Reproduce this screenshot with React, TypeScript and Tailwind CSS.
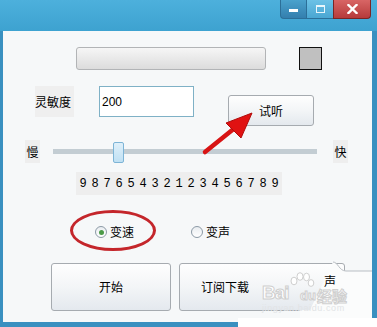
import React from "react";

const cjk = "font-['Noto_Sans_CJK_SC','Noto_Sans',sans-serif]";

function Radio({ checked, label }: { checked?: boolean; label: string }) {
  return (
    <div className="flex items-center">
      <div className="w-[12px] h-[12px] rounded-full border border-[#8c9aa6] bg-gradient-to-b from-[#e9edf0] to-[#ffffff] flex items-center justify-center">
        {checked && <div className="w-[5px] h-[5px] rounded-full bg-[#4b9a47]" />}
      </div>
      <span className="ml-[3px] leading-[16px]">{label}</span>
    </div>
  );
}

export default function App() {
  const digits = ["9", "8", "7", "6", "5", "4", "3", "2", "1", "2", "3", "4", "5", "6", "7", "8", "9"];
  return (
    <div className={`relative w-[377px] h-[327px] overflow-hidden bg-[#3990c0] text-[12px] text-black ${cjk}`}>
      {/* title bar */}
      <div className="h-[31px] bg-gradient-to-b from-[#4db0dc] to-[#3da2d0] flex justify-end pr-[6px]">
        <div className="flex h-[19px]">
          <div className="w-[26px] rounded-bl-[4px] border border-t-0 border-r-0 border-[#2c6f98] bg-gradient-to-b from-[#4aa2cd] to-[#347fae] flex items-center justify-center">
            <div className="w-[9px] h-[3px] bg-white mt-[2px]" />
          </div>
          <div className="w-[27px] border-b border-l border-[#2c6f98] bg-gradient-to-b from-[#6cc1e6] to-[#4aa6d2] flex items-center justify-center">
            <div className="w-[9px] h-[8px] border border-[#e9f6fb] border-t-2" />
          </div>
          <div className="w-[38px] rounded-br-[4px] border border-t-0 border-[#7a2525] bg-gradient-to-b from-[#d86565] to-[#b63a3b] flex items-center justify-center">
            <svg width="11" height="10" viewBox="0 0 11 10">
              <path d="M1.5 1 L9.5 9 M9.5 1 L1.5 9" stroke="#ffffff" strokeWidth="2.4" strokeLinecap="square" />
            </svg>
          </div>
        </div>
      </div>

      {/* client area */}
      <div className="relative ml-[3px] mr-[5px] h-[291px] bg-[#f6f8f9] flex flex-col">
        {/* row 1 */}
        <div className="mt-[16px] flex pl-[73px]">
          <div className="w-[190px] h-[23px] rounded-[3px] border border-[#b2b4b6] bg-gradient-to-b from-[#f6f6f6] to-[#dcdcdc]" />
          <div className="ml-[33px] w-[23px] h-[23px] border border-[#111] bg-[#c0c0c0]" />
        </div>

        {/* row 2 */}
        <div className="mt-[16px] flex items-start pl-[32px]">
          <div className="w-[39px] h-[31px] bg-[#efefef] flex items-center">灵敏度</div>
          <div className="ml-[25px] w-[95px] h-[31px] border border-[#7fb1c6] bg-white pl-[2px] flex items-center font-['Liberation_Sans',sans-serif] text-[12px]">
            200
          </div>
          <div className="ml-[34px] mt-[9px] w-[86px] h-[31px] rounded-[3px] border border-[#a6abb0] bg-gradient-to-b from-[#fefefe] via-[#f3f5f7] to-[#e4e9ee] flex items-center justify-center">
            试听
          </div>
        </div>

        {/* row 3 slider */}
        <div className="mt-[14px] flex items-center pl-[22px] h-[23px]">
          <div className="w-[15px] h-[23px] bg-[#eeeeee] flex items-center justify-center">慢</div>
          <div className="ml-[13px] w-[264px] h-[5px] bg-[#c3cdd3] relative">
            <div className="absolute left-[60px] top-[-7px] w-[11px] h-[21px] rounded-[2px] border border-[#7db4d6] bg-gradient-to-b from-[#dff0fa] to-[#bfe0f3]" />
          </div>
          <div className="ml-[16px] w-[15px] h-[23px] bg-[#eeeeee] flex items-center justify-center">快</div>
        </div>

        {/* row 4 digits */}
        <div className="mt-[9px] pl-[73px] flex">
          <div className="w-[206px] h-[23px] bg-[#eeeeee] flex items-center pl-[1px] font-['Liberation_Mono',monospace] text-[12px]">
            {digits.map((d, i) => (
              <span key={i} className="w-[12px] text-center">
                {d}
              </span>
            ))}
          </div>
        </div>

        {/* row 5 radios */}
        <div className="mt-[29px] h-[16px] flex items-center pl-[92px]">
          <Radio checked label="变速" />
          <div className="ml-[57px]">
            <Radio label="变声" />
          </div>
        </div>

        {/* row 6 buttons */}
        <div className="mt-[23px] flex pl-[48px]">
          <div className="w-[120px] h-[48px] rounded-[3px] border border-[#a6abb0] bg-gradient-to-b from-[#fefefe] via-[#f3f5f7] to-[#e4e9ee] flex items-center justify-center">
            开始
          </div>
          <div className="ml-[8px] w-[166px] h-[48px] rounded-[3px] border border-[#a6abb0] bg-gradient-to-b from-[#fefefe] via-[#f3f5f7] to-[#e4e9ee] flex items-center pl-[21px]">
            订阅下载
          </div>
        </div>
      </div>

      {/* watermark patch covering lower right (page curl) */}
      <svg className="absolute left-[300px] top-[258px]" width="77" height="69" viewBox="0 0 77 69">
        <path d="M33 4 C38 4 39 13 46 13 L72 13 L72 60 L77 60 L77 69 L0 69 L0 52 L10 52 L33 4 Z" fill="#fbfcfc" />
        <path d="M33 4 C38 4 39 13 46 13 L72 13" fill="none" stroke="#b9bec3" strokeWidth="1" />
      </svg>
      <div className="absolute left-[238px] top-[318px] w-[139px] h-[9px] bg-white" />

      {/* watermark Baidu logo */}
      <div className="absolute left-[262px] top-[283px] whitespace-nowrap font-['Liberation_Sans',sans-serif] font-bold text-[19px] leading-[20px] tracking-[-1px] text-white [-webkit-text-stroke:1px_#cfcfcf]">
        Bai
      </div>
      <svg className="absolute left-[289px] top-[272px]" width="26" height="30" viewBox="0 0 26 30">
        <g fill="#ffffff" stroke="#cfcfcf" strokeWidth="1">
          <ellipse cx="5" cy="9" rx="3" ry="3.8" />
          <ellipse cx="11" cy="4.5" rx="3" ry="3.8" />
          <ellipse cx="17.5" cy="5" rx="3" ry="3.8" />
          <ellipse cx="22" cy="11" rx="2.8" ry="3.4" />
        </g>
      </svg>
      <div className="absolute left-[300px] top-[289px] whitespace-nowrap font-['Liberation_Sans',sans-serif] font-bold text-[13px] leading-[14px] text-white [-webkit-text-stroke:1px_#cfcfcf]">
        du
      </div>
      <div className={`absolute left-[317px] top-[288px] whitespace-nowrap text-[15px] leading-[15px] font-bold text-white [-webkit-text-stroke:1px_#cfcfcf] ${cjk}`}>
        经验
      </div>
      <div className="absolute left-[262px] top-[303px] whitespace-nowrap font-['Liberation_Sans',sans-serif] text-[9px] leading-[10px] tracking-[0.6px] text-[#e2e4e6]">
        jingyan.baidu.com
      </div>
      <div className="absolute left-[324px] top-[274px] leading-[13px]">声</div>

      {/* red annotation ellipse */}
      <div className="absolute left-[70px] top-[210px] w-[86px] h-[41px] rounded-[50%] border-[3px] border-[#c4262b]" />

      {/* red arrow */}
      <svg className="absolute left-0 top-0 pointer-events-none" width="377" height="327" viewBox="0 0 377 327">
        <line x1="205" y1="152" x2="236" y2="127" stroke="#d81414" strokeWidth="4.5" strokeLinecap="round" />
        <polygon points="252,113 226,123 241,138" fill="#e01212" stroke="#b00c0c" strokeWidth="1" strokeLinejoin="round" />
      </svg>
    </div>
  );
}
